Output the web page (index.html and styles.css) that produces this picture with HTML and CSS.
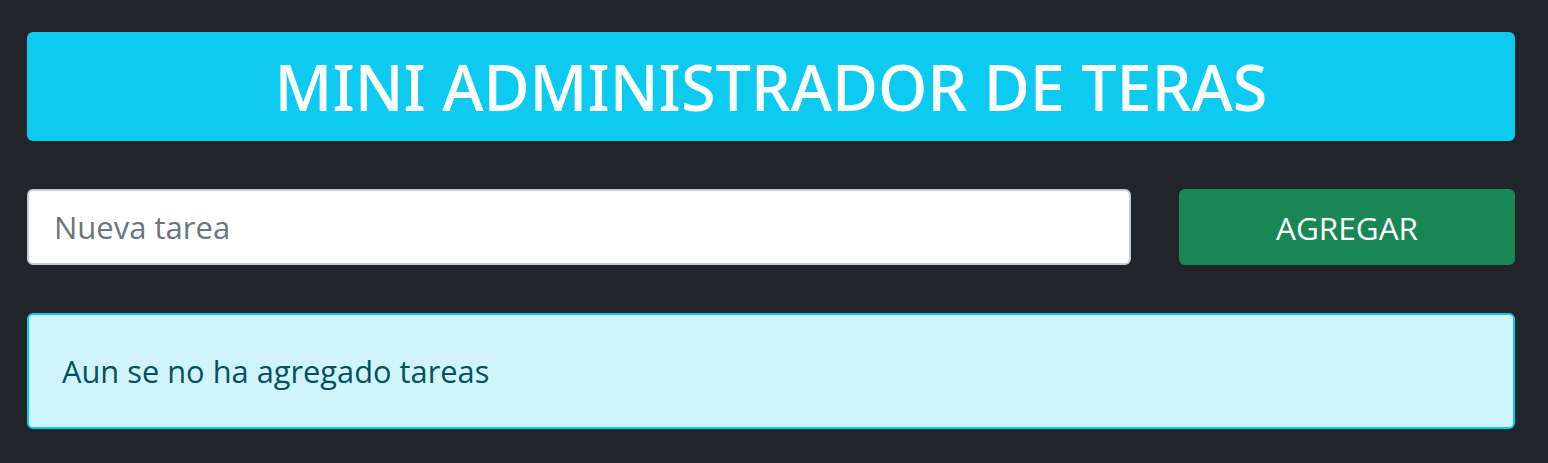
FILE: index.html
```html
<!DOCTYPE html>
<html lang="es">
<head>
<meta charset="utf-8">
<title>Mini administrador de tareas</title>
<link rel="stylesheet" href="styles.css">
</head>
<body>
<main class="page">
  <header class="banner">
    <h1 class="banner-title">MINI ADMINISTRADOR DE TERAS</h1>
  </header>
  <form class="task-form">
    <input class="task-input" type="text" placeholder="Nueva tarea">
    <button class="task-button" type="button">AGREGAR</button>
  </form>
  <div class="alert">Aun se no ha agregado tareas</div>
</main>
</body>
</html>
```
FILE: styles.css
```css
* { box-sizing: border-box; }
html, body { margin: 0; padding: 0; }
body {
  background: #212529;
  font-family: "Open Sans", "Noto Sans", sans-serif;
  width: 1548px;
  height: 463px;
  overflow: hidden;
}
.page {
  padding: 32px 33px 0 27px;
  display: flex;
  flex-direction: column;
  gap: 48px;
}
.banner {
  background: #0dcaf0;
  border-radius: 6px;
  height: 109px;
  display: flex;
  align-items: center;
  justify-content: center;
}
.banner-title {
  margin: 0;
  color: #fff;
  font-family: "Noto Sans", "Open Sans", sans-serif;
  font-weight: 500;
  font-size: 63px;
  line-height: 1;
}
.task-form {
  display: flex;
  gap: 48px;
  margin: 0;
}
.task-input {
  width: 1104px;
  height: 76px;
  border: 2px solid #c9cdd2;
  border-radius: 6px;
  background: #fff;
  padding: 0 25px;
  font-family: inherit;
  font-size: 31px;
  color: #212529;
  outline: none;
}
.task-input::placeholder { color: #6c757d; }
.task-button {
  flex: 1;
  height: 76px;
  border: none;
  border-radius: 6px;
  background: #198754;
  color: #fff;
  font-family: inherit;
  font-size: 31.5px;
  padding: 0;
}
.alert {
  height: 116px;
  background: #cff4fc;
  border: 2px solid #0dcaf0;
  border-radius: 6px;
  color: #055160;
  font-size: 30.8px;
  display: flex;
  align-items: center;
  padding: 0 33px;
}
```
